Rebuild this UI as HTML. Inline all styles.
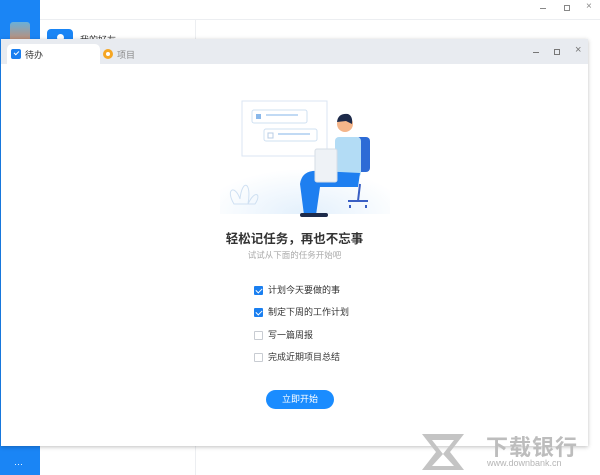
<!DOCTYPE html><html><head><meta charset="utf-8"><style>
*{margin:0;padding:0;box-sizing:border-box}
body{width:600px;height:475px;position:relative;overflow:hidden;background:#fff;font-family:"Liberation Sans","Noto Sans CJK SC",sans-serif}
.a{position:absolute}
.cb{position:absolute;left:254px;width:9px;height:9px;border:1px solid #c8ccd2;border-radius:1px;background:#fff}
.cb.on{background:#1a7ff0;border-color:#1a7ff0}
.cb.on:after{content:"";position:absolute;left:2px;top:0px;width:3px;height:5px;border:solid #fff;border-width:0 1.3px 1.3px 0;transform:rotate(45deg)}
.t{position:absolute;left:268px;font-size:9px;color:#333;line-height:12px}
</style></head><body>
<div class="a" style="left:0;top:0;width:40px;height:475px;background:#1a85f5"></div>
<div class="a" style="left:10px;top:22px;width:20px;height:20px;border-radius:3px;background:linear-gradient(#6ab0d8,#c98a6a)"></div>
<div class="a" style="left:40px;top:19px;width:560px;height:1px;background:#eceef1"></div>
<div class="a" style="left:47px;top:29px;width:26px;height:14px;border-radius:4px 4px 0 0;background:#1a85f5"></div>
<div class="a" style="left:57px;top:34px;width:7px;height:7px;border-radius:50%;background:#fff"></div>
<div class="a" style="left:80px;top:33px;font-size:9px;color:#333">我的好友</div>
<div class="a" style="left:195px;top:20px;width:1px;height:455px;background:#eceef1"></div>
<div class="a" style="left:540px;top:8px;width:6px;height:1px;background:#888"></div>
<div class="a" style="left:564px;top:5px;width:6px;height:6px;border:1.2px solid #888"></div>
<div class="a" style="left:586px;top:1px;font-size:10px;color:#888">×</div>
<div class="a" style="left:14px;top:459px;color:#fff;font-size:9px">···</div>
<!-- dialog -->
<div class="a" style="left:1px;top:39px;width:587px;height:407px;background:#fff;box-shadow:0 1px 4px rgba(0,0,0,.25)">
 <div class="a" style="left:0;top:0;width:587px;height:25px;background:#e8ebf0"></div>
 <div class="a" style="left:6px;top:5px;width:93px;height:20px;background:#fff;border-radius:5px 5px 0 0"></div>
 <div class="a" style="left:10px;top:10px;width:10px;height:10px;background:#1a7ff0;border-radius:2px"></div>
 <div class="a" style="left:13.5px;top:11px;width:3px;height:5px;border:solid #fff;border-width:0 1.3px 1.3px 0;transform:rotate(45deg)"></div>
 <div class="a" style="left:24px;top:9px;font-size:9px;color:#333">待办</div>
 <div class="a" style="left:102px;top:10px;width:10px;height:10px;border-radius:50%;background:#f5a623"></div>
 <div class="a" style="left:105px;top:13px;width:4px;height:4px;border-radius:50%;background:#fff"></div>
 <div class="a" style="left:116px;top:9px;font-size:9px;color:#888">项目</div>
 <div class="a" style="left:532px;top:13px;width:6px;height:1px;background:#777"></div>
 <div class="a" style="left:553px;top:10px;width:6px;height:6px;border:1.2px solid #777"></div>
 <div class="a" style="left:574px;top:5px;font-size:11px;color:#777">×</div>
 <!-- illustration -->
 <svg class="a" style="left:219px;top:50px" width="170" height="130" viewBox="0 0 170 130">
  <defs><radialGradient id="g" cx="0.5" cy="1" r="0.6"><stop offset="0" stop-color="#e3f0fc"/><stop offset="1" stop-color="#fff"/></radialGradient></defs>
  <rect x="0" y="50" width="170" height="75" fill="url(#g)"/>
  <rect x="22" y="12" width="85" height="55" fill="#fff" stroke="#dbe6f3"/>
  <rect x="32" y="21" width="55" height="13" rx="2" fill="#fff" stroke="#cfe0f2"/>
  <rect x="36" y="25" width="5" height="5" fill="#8ab8ea"/>
  <line x1="46" y1="26" x2="78" y2="26" stroke="#9cc4ee" stroke-width="1.3"/>
  <rect x="44" y="40" width="53" height="12" rx="2" fill="#fff" stroke="#cfe0f2"/>
  <rect x="48" y="44" width="5" height="5" fill="none" stroke="#b8cde4"/>
  <line x1="58" y1="45" x2="90" y2="45" stroke="#9cc4ee" stroke-width="1.3"/>
  <path d="M14 115 C5 100 15 95 20 110 C22 90 32 92 28 115 C35 100 42 105 35 115Z" fill="none" stroke="#cfe0f2"/>
  <path d="M140 95 L138 112 M128 112 L148 112 M130 116 v3 M146 116 v3" stroke="#3a5fc4" stroke-width="2" fill="none"/>
  <rect x="136" y="48" width="14" height="35" rx="4" fill="#2d6bd6"/>
  <rect x="115" y="48" width="26" height="40" rx="4" fill="#b3dcf5"/>
  <path d="M80 95 Q82 80 100 82 L140 84 L138 98 L100 98 L96 126 L84 126Z" fill="#1e7ff0"/>
  <rect x="95" y="60" width="22" height="33" rx="2" fill="#eef2f6" stroke="#d6dde6"/>
  <circle cx="125" cy="35" r="8" fill="#f4b58a"/>
  <path d="M117 33 Q118 24 128 25 Q133 27 132 35 L126 32Z" fill="#1d2a4a"/>
  <rect x="80" y="124" width="28" height="4" rx="2" fill="#1d2a4a"/>
 </svg>
 <div class="a" style="left:0;width:587px;top:189px;text-align:center;font-size:12.5px;font-weight:bold;color:#333">轻松记任务，再也不忘事</div>
 <div class="a" style="left:0;width:587px;top:210px;text-align:center;font-size:8.5px;color:#aaa">试试从下面的任务开始吧</div>
</div>
<div class="cb on" style="top:286px"></div><div class="t" style="top:284px">计划今天要做的事</div>
<div class="cb on" style="top:308px"></div><div class="t" style="top:306px">制定下周的工作计划</div>
<div class="cb" style="top:331px"></div><div class="t" style="top:329px">写一篇周报</div>
<div class="cb" style="top:353px"></div><div class="t" style="top:351px">完成近期项目总结</div>
<div class="a" style="left:266px;top:390px;width:68px;height:19px;border-radius:10px;background:#1a8cff;color:#fff;font-size:9px;text-align:center;line-height:19px">立即开始</div>
<!-- watermark -->
<svg class="a" style="left:420px;top:432px" width="48" height="40"><path d="M2 2H44L30 20L44 38H2L16 20Z M12 8L23 22L34 8Z M12 34L23 22L34 34Z" fill="#c4c4c4" fill-rule="evenodd"/></svg>
<div class="a" style="left:486px;top:430px;font-size:22px;font-weight:bold;color:#bdbdbd;letter-spacing:1px">下载银行</div>
<div class="a" style="left:487px;top:458px;font-size:9px;color:#b5b5b5">www.downbank.cn</div>
</body></html>
